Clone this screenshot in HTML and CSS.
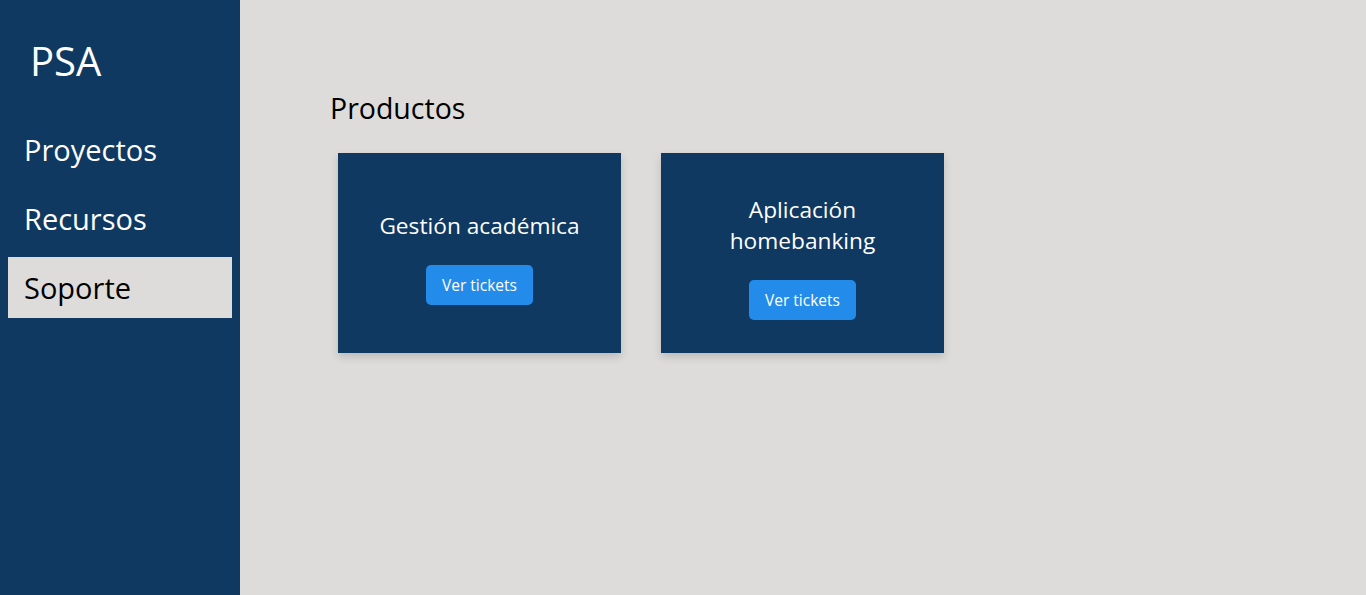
FILE: index.html
```html
<!DOCTYPE html>
<html lang="es">
<head>
<meta charset="utf-8">
<title>PSA</title>
<link rel="stylesheet" href="styles.css">
</head>
<body>
<aside class="sidebar">
  <div class="brand">PSA</div>
  <nav class="nav">
    <a class="nav-item" href="#">Proyectos</a>
    <a class="nav-item" href="#">Recursos</a>
    <a class="nav-item active" href="#">Soporte</a>
  </nav>
</aside>
<main class="main">
  <h1 class="title">Productos</h1>
  <div class="cards">
    <div class="card">
      <div class="card-title">Gestión académica</div>
      <button class="btn">Ver tickets</button>
    </div>
    <div class="card">
      <div class="card-title">Aplicación<br>homebanking</div>
      <button class="btn">Ver tickets</button>
    </div>
  </div>
</main>
</body>
</html>
```
FILE: styles.css
```css
* { box-sizing: border-box; }
html, body { margin: 0; height: 100%; }
body {
  display: flex;
  font-family: "Open Sans", "Noto Sans", sans-serif;
  background: #dddcda;
  color: #000;
}
.sidebar {
  width: 240px;
  flex: none;
  background: #0f3961;
  color: #fff;
  padding-top: 36px;
}
.brand {
  font-size: 40px;
  line-height: 50px;
  padding-left: 30px;
  height: 83px;
}
.nav {
  display: flex;
  flex-direction: column;
  gap: 8px;
  padding: 0 8px;
}
.nav-item {
  display: block;
  height: 61px;
  line-height: 61px;
  padding-left: 16px;
  font-size: 29px;
  color: #fff;
  text-decoration: none;
}
.nav-item.active {
  background: #dddcda;
  color: #000;
}
.main {
  flex: 1;
  padding: 88px 0 0 90px;
}
.title {
  margin: 0;
  font-size: 28.5px;
  font-weight: 400;
  line-height: 40px;
}
.cards {
  display: flex;
  gap: 40px;
  padding: 25px 8px 0;
}
.card {
  width: 283px;
  height: 200px;
  background: #0f3961;
  color: #fff;
  display: flex;
  flex-direction: column;
  align-items: center;
  justify-content: center;
  padding-top: 8px;
  text-align: center;
  box-shadow: 0 4px 8px rgba(0,0,0,0.15);
}
.card-title {
  font-size: 22.7px;
  line-height: 31px;
  margin-bottom: 24px;
}
.btn {
  height: 40px;
  padding: 0 16px;
  border: 0;
  border-radius: 5px;
  background: #238be9;
  color: #fff;
  font-family: inherit;
  font-size: 15.5px;
}
```
